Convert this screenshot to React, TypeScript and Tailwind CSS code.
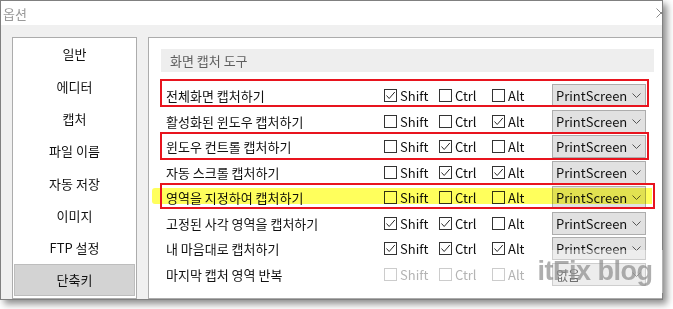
import React from 'react';

type Row = { label: string; shift: boolean; ctrl: boolean; alt: boolean; key: string; disabled?: boolean };

const rows: Row[] = [
    { label: '전체화면 캡처하기', shift: true, ctrl: false, alt: false, key: 'PrintScreen' },
    { label: '활성화된 윈도우 캡처하기', shift: false, ctrl: false, alt: true, key: 'PrintScreen' },
    { label: '윈도우 컨트롤 캡처하기', shift: false, ctrl: true, alt: false, key: 'PrintScreen' },
    { label: '자동 스크롤 캡처하기', shift: false, ctrl: true, alt: true, key: 'PrintScreen' },
    { label: '영역을 지정하여 캡처하기', shift: false, ctrl: false, alt: false, key: 'PrintScreen' },
    { label: '고정된 사각 영역을 캡처하기', shift: true, ctrl: true, alt: false, key: 'PrintScreen' },
    { label: '내 마음대로 캡처하기', shift: true, ctrl: true, alt: true, key: 'PrintScreen' },
    { label: '마지막 캡처 영역 반복', shift: false, ctrl: false, alt: false, key: '없음', disabled: true },
];

const menu = ['일반', '에디터', '캡처', '파일 이름', '자동 저장', '이미지', 'FTP 설정', '단축키'];

const Check: React.FC<{ checked: boolean; label: string; disabled?: boolean; className: string }> = ({ checked, label, disabled, className }) => (
    <div className={`flex items-center ${className}`}>
        <span
            className={`w-[13px] h-[13px] border bg-white flex items-center justify-center ${disabled ? 'border-[#cccccc]' : 'border-[#333333]'}`}
        >
            {checked && (
                <svg width="11" height="11" viewBox="0 0 11 11">
                    <path d="M1.5 5.5 L4.2 8.5 L9.8 2" fill="none" stroke="#2a2a2a" strokeWidth="1" />
                </svg>
            )}
        </span>
        <span className={`ml-[3px] text-[13px] ${disabled ? 'text-[#b4b4b4]' : 'text-[#111]'}`}>{label}</span>
    </div>
);

const App: React.FC = () => {
    return (
        <div className="relative w-[673px] h-[309px] bg-white overflow-hidden font-['Noto_Sans_CJK_KR','Noto_Sans',sans-serif]">
            <div className="w-[663px] h-[300px] border border-[#808080] bg-[#f0f0f0] shadow-[4px_4px_7px_rgba(0,0,0,0.45)] flex flex-col overflow-hidden">
                {/* title bar */}
                <div className="h-[24px] bg-white flex items-center justify-between pl-[2px] shrink-0">
                    <span className="text-[13px] text-[#9a9a9a] leading-none">옵션</span>
                    <svg width="10" height="10" viewBox="0 0 10 10" className="-mr-[4px]">
                        <path d="M0.5 0.5 L9.5 9.5 M9.5 0.5 L0.5 9.5" stroke="#8a8a8a" strokeWidth="1" />
                    </svg>
                </div>

                <div className="flex-1 flex gap-[11px] pl-[11px] pt-[12px]">
                    {/* sidebar */}
                    <div className="w-[125px] bg-white border border-[#acacac] px-px flex flex-col">
                        {menu.map((m, i) => (
                            <div
                                key={m}
                                className={`h-[32.3px] flex items-center justify-center text-[13px] text-[#111] ${
                                    i === menu.length - 1 ? 'bg-[#d3d3d3] border border-[#bdbdbd]' : ''
                                }`}
                            >
                                {m}
                            </div>
                        ))}
                    </div>

                    {/* content panel */}
                    <div className="flex-1 bg-white border-l border-t border-b border-[#acacac] pl-[12px] pr-[8px] pt-[11px]">
                        <div className="h-[23px] bg-[#eeeeee] flex items-center pl-[9px] text-[13px] text-[#5e5e5e]">화면 캡처 도구</div>
                        <div className="mt-[11px] pl-[5px]">
                            {rows.map((r) => (
                                <div key={r.label} className="h-[25.5px] flex items-center">
                                    <span className="w-[218px] text-[13px] text-[#111]">{r.label}</span>
                                    <Check className="w-[55px]" checked={r.shift} label="Shift" disabled={r.disabled} />
                                    <Check className="w-[53px]" checked={r.ctrl} label="Ctrl" disabled={r.disabled} />
                                    <Check className="w-[60px]" checked={r.alt} label="Alt" disabled={r.disabled} />
                                    <div className="w-[94px] h-[23px] bg-[#e1e1e1] border border-[#adadad] flex items-center justify-between pl-[3px] pr-[4px]">
                                        <span className="text-[13px] text-[#111]">{r.key}</span>
                                        <svg width="9" height="5" viewBox="0 0 9 5">
                                            <path d="M0.5 0.5 L4.5 4.5 L8.5 0.5" fill="none" stroke="#555" strokeWidth="1" />
                                        </svg>
                                    </div>
                                </div>
                            ))}
                        </div>
                    </div>
                </div>
            </div>

            {/* highlighter + annotation boxes */}
            <div className="absolute left-[152px] top-[188px] w-[500px] h-[16px] bg-[#ffff5c] mix-blend-multiply rounded-l-[3px]" />
            <div className="absolute left-[160px] top-[79px] w-[489px] h-[28px] border-2 border-[#e8141e]" />
            <div className="absolute left-[160px] top-[132px] w-[489px] h-[28px] border-2 border-[#e8141e]" />
            <div className="absolute left-[160px] top-[183px] w-[495px] h-[26px] border-2 border-[#e8141e]" />

            {/* watermark */}
            <div className="absolute left-[527px] top-[250px] w-[136px] h-[43px] bg-white/40 flex items-center justify-center">
                <span className="font-['Liberation_Sans',sans-serif] font-bold text-[27px] text-[#8c8c8c]/70 tracking-[-0.5px]">itFix blog</span>
            </div>
        </div>
    );
};

export default App;
